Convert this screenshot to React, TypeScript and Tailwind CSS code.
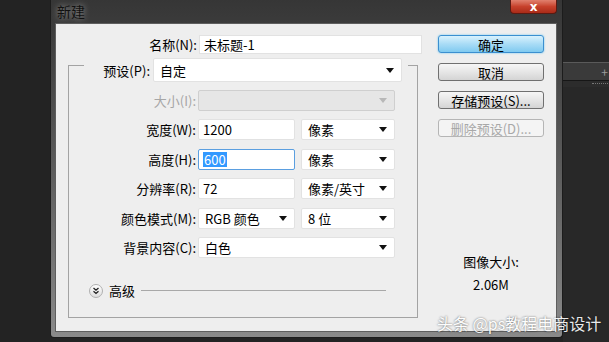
const font = { fontFamily: '"Noto Sans CJK SC", "Liberation Sans", sans-serif' };

function Arrow({ light }: { light?: boolean }) {
  return (
    <svg width="8" height="5" viewBox="0 0 8 5" className="shrink-0">
      <path d="M0 0H8L4 5Z" fill={light ? '#b8b8b8' : '#111'} />
    </svg>
  );
}

function Select({ value, w, disabled }: { value?: string; w: string; disabled?: boolean }) {
  return (
    <div
      className={`${w} h-[21px] flex items-center pl-[6px] pr-[7px] border rounded-[2px] ${
        disabled ? 'bg-[#e6e6e6] border-[#cfcfcf]' : 'bg-white border-[#e2e2e2]'
      }`}
    >
      <span className="flex-1 text-[13px] leading-none text-black">{value}</span>
      <Arrow light={disabled} />
    </div>
  );
}

function Input({ value, w, focus }: { value: string; w: string; focus?: boolean }) {
  return (
    <div
      className={`${w} h-[21px] flex items-center pl-[4px] bg-white border rounded-[2px] ${
        focus ? 'border-[#5b9fe0]' : 'border-[#e2e2e2]'
      }`}
    >
      {focus ? (
        <span className="bg-[#3399ff] text-white text-[13px] leading-[15px] px-[1px]">{value}</span>
      ) : (
        <span className="text-[13px] leading-none text-black">{value}</span>
      )}
    </div>
  );
}

function Row({ label, children, disabled }: { label: string; children: React.ReactNode; disabled?: boolean }) {
  return (
    <div className="flex items-center h-[21px]">
      <div className={`w-[127px] text-right text-[13px] leading-none ${disabled ? 'text-[#a6a6a6]' : 'text-black'}`}>
        {label}
      </div>
      <div className="ml-[2px] flex gap-[6px]">{children}</div>
    </div>
  );
}

function Button({ label, primary, disabled }: { label: string; primary?: boolean; disabled?: boolean }) {
  const tone = primary
    ? 'bg-gradient-to-b from-[#d9f2fd] via-[#a9dcf6] to-[#7fcaf0] border-[#3b8fd0] shadow-[0_0_2px_#5fc4f3] text-black'
    : disabled
    ? 'bg-[#f4f4f4] border-[#b5b5b5] text-[#a8a8a8]'
    : 'bg-gradient-to-b from-[#f6f6f6] via-[#e6e6e6] to-[#d4d4d4] border-[#707070] text-black';
  return (
    <div className={`w-[106px] h-[18px] flex items-center justify-center rounded-[3px] border text-[13px] leading-none ${tone}`}>
      {label}
    </div>
  );
}

export default function App() {
  return (
    <div className="w-[609px] h-[342px] bg-[#232323] flex overflow-hidden relative" style={font}>
      <div className="w-[50px] shrink-0" />

      {/* dialog window */}
      <div className="w-[513px] h-[338px] shrink-0 flex flex-col bg-gradient-to-b from-[#363636] via-[#5c5c5c] to-[#8a8a8a] border-x border-b border-[#1c1c1c] rounded-b-[4px]">
        <div className="h-[23px] flex items-start shrink-0">
          <span className="ml-[6px] mt-[3px] text-[14px] leading-[16px] text-[#111] [text-shadow:0_0_6px_rgba(255,255,255,0.55)]">
            新建
          </span>
          <div className="ml-auto mr-[5px] w-[47px] h-[14px] rounded-b-[4px] border border-t-0 border-[#5a1a12] bg-gradient-to-b from-[#e0806e] via-[#c7412c] to-[#a92b18] flex items-center justify-center">
            <span className="text-white text-[12px] leading-none font-bold" style={{ fontFamily: '"DejaVu Sans", sans-serif' }}>
              x
            </span>
          </div>
        </div>

        <div className="ml-[4px] w-[502px] h-[309px] bg-[#eeeeee] border border-[#5e5e5e] flex">
          {/* left column */}
          <div className="w-[370px] flex flex-col pt-[11px]">
            <div className="flex items-center h-[19px]">
              <div className="w-[141px] text-right text-[13px] leading-none text-black">名称(N):</div>
              <div className="ml-[2px] w-[223px] h-[19px] bg-white border border-[#e2e2e2] flex items-center pl-[4px] text-[13px] leading-none text-black">
                未标题-1
              </div>
            </div>

            <div className="mt-[11px] ml-[12px] w-[350px] h-[253px] border border-[#a3a3a3] flex flex-col">
              <div className="-mt-[8px] ml-[15px] w-[324px] h-[24px] bg-[#eeeeee] flex items-center">
                <div className="w-[66px] text-right text-[13px] leading-none text-black">预设(P):</div>
                <div className="ml-[3px] w-[249px] h-[24px] bg-white border border-[#e2e2e2] rounded-[2px] flex items-center pl-[6px] pr-[7px]">
                  <span className="flex-1 text-[13px] leading-none text-black">自定</span>
                  <Arrow />
                </div>
              </div>

              <div className="mt-[8px] flex flex-col gap-[8.4px]">
                <Row label="大小(I):" disabled>
                  <Select w="w-[197px]" disabled />
                </Row>
                <Row label="宽度(W):">
                  <Input w="w-[97px]" value="1200" />
                  <Select w="w-[94px]" value="像素" />
                </Row>
                <Row label="高度(H):">
                  <Input w="w-[97px]" value="600" focus />
                  <Select w="w-[94px]" value="像素" />
                </Row>
                <Row label="分辨率(R):">
                  <Input w="w-[97px]" value="72" />
                  <Select w="w-[94px]" value="像素/英寸" />
                </Row>
                <Row label="颜色模式(M):">
                  <Select w="w-[97px]" value="RGB 颜色" />
                  <Select w="w-[94px]" value="8 位" />
                </Row>
                <Row label="背景内容(C):">
                  <Select w="w-[197px]" value="白色" />
                </Row>
              </div>

              <div className="mt-[26px] ml-[20px] flex items-center h-[14px]">
                <div className="w-[14px] h-[14px] rounded-full border border-[#b0b0b0] bg-gradient-to-b from-white to-[#dedede] flex items-center justify-center">
                  <svg width="8" height="8" viewBox="0 0 8 8">
                    <path d="M1.5 1L4 3.2L6.5 1M1.5 4.3L4 6.5L6.5 4.3" stroke="#222" strokeWidth="1.3" fill="none" />
                  </svg>
                </div>
                <span className="ml-[6px] text-[13px] leading-none text-black">高级</span>
                <div className="ml-[6px] w-[245px] h-px bg-[#a8a8a8]" />
              </div>
            </div>
          </div>

          {/* right column */}
          <div className="ml-[12px] w-[106px] flex flex-col pt-[11px]">
            <div className="flex flex-col gap-[10px]">
              <Button label="确定" primary />
              <Button label="取消" />
              <Button label="存储预设(S)..." />
              <Button label="删除预设(D)..." disabled />
            </div>
            <div className="mt-[117px] text-center text-[13px] leading-[16px] text-black">图像大小:</div>
            <div className="mt-[7px] text-center text-[13px] leading-[16px] text-black">2.06M</div>
          </div>
        </div>
      </div>

      {/* background panel to the right */}
      <div className="flex-1 flex flex-col">
        <div className="h-[62px] bg-[#272727]" />
        <div className="h-px bg-[#5a5a5a]" />
        <div className="h-[17px] bg-[#3a3a3a] flex items-center justify-end pr-[1px]">
          <span className="text-[#9a9a9a] text-[12px] leading-none">+</span>
        </div>
        <div className="h-px bg-[#161616]" />
        <div className="h-[6px] bg-[#2c2c2c] flex items-center justify-end pr-[1px]">
          <div className="w-[16px] h-[2px] border-t border-dotted border-[#777]" />
        </div>
        <div className="flex-1 bg-[#282828]" />
      </div>

      <div className="absolute left-[437px] top-[313px] text-[16px] leading-[20px] text-white [text-shadow:0_0_2px_rgba(0,0,0,0.7)] opacity-90">
        头条 @ps教程电商设计
      </div>
    </div>
  );
}
